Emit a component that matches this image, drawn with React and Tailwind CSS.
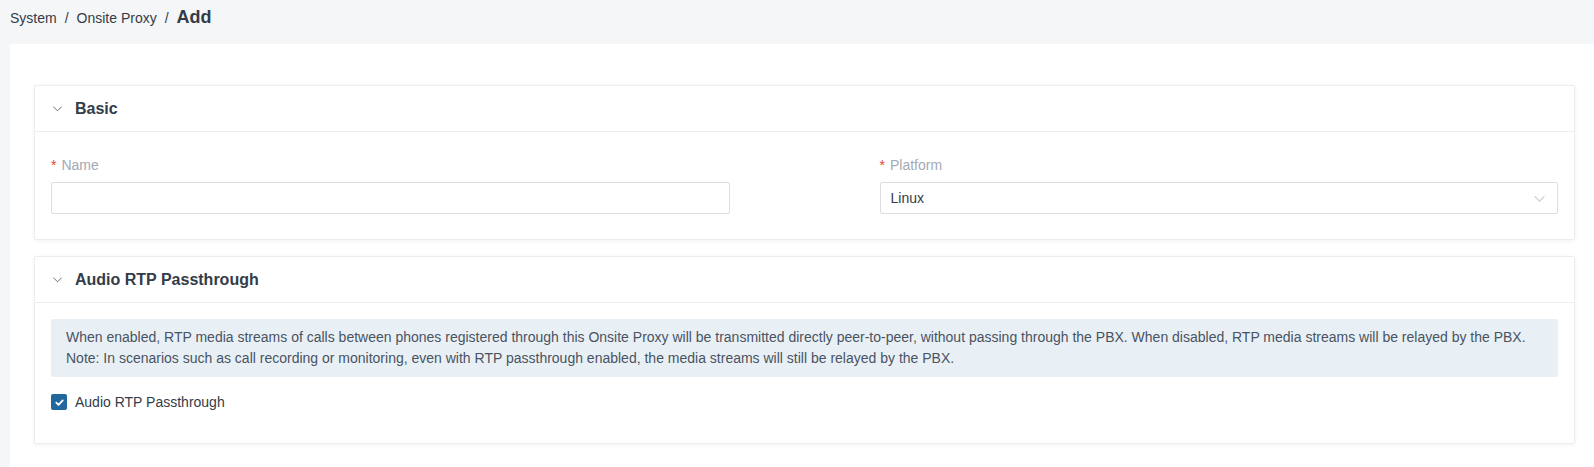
import { useState } from 'react'

function Chevron({ className }) {
  return (
    <svg viewBox="0 0 12 12" className={className} fill="none" stroke="currentColor" strokeWidth="1">
      <path d="M1.5 4l4.5 4.5 4.5-4.5" />
    </svg>
  )
}

function Section({ title, children }) {
  return (
    <div className="bg-white border border-[#ebedf0] rounded-[2px] shadow-[0_1px_4px_rgba(0,0,0,0.06)]">
      <div className="h-[46px] flex items-center px-4 border-b border-[#ebedf0]">
        <Chevron className="w-[11px] h-[11px] text-[#5b6470] ml-[1px]" />
        <span className="ml-[12px] text-[16px] font-bold text-[#333c48]">{title}</span>
      </div>
      {children}
    </div>
  )
}

export default function App() {
  const [name, setName] = useState('')
  const [rtp, setRtp] = useState(true)

  return (
    <div className="min-h-[467px] bg-[#f5f6f8] font-['Liberation_Sans',Arial,sans-serif] text-[14px] text-[#333c48]">
      <div className="h-[44px] flex items-start pt-[7px] pl-[10px]">
        <span className="text-[14px] text-[#333c48] leading-[20px] mt-[1px]">System</span>
        <span className="mx-[8px] text-[14px] text-[#333c48] leading-[20px] mt-[1px]">/</span>
        <span className="text-[14px] text-[#333c48] leading-[20px] mt-[1px]">Onsite Proxy</span>
        <span className="mx-[8px] text-[14px] text-[#333c48] leading-[20px] mt-[1px]">/</span>
        <span className="text-[18px] font-bold text-[#333c48] leading-[20px]">Add</span>
      </div>
      <div className="ml-[10px] bg-white pt-[41px] pl-[24px] pr-[19px] pb-[25px] flex flex-col gap-[16px]">
        <Section title="Basic">
          <div className="grid grid-cols-2 gap-x-[150px] px-4 pt-[23px] pb-[25px]">
            <div>
              <div className="text-[14px] text-[#a3aab5] leading-[20px]"><span className="text-[#e5452f] mr-[5px]">*</span>Name</div>
              <input
                value={name}
                onChange={e => setName(e.target.value)}
                className="mt-[7px] w-full h-[32px] border border-[#dcdee3] rounded-[2px] px-[10px] outline-none"
              />
            </div>
            <div>
              <div className="text-[14px] text-[#a3aab5] leading-[20px]"><span className="text-[#e5452f] mr-[5px]">*</span>Platform</div>
              <div className="mt-[7px] w-full h-[32px] border border-[#dcdee3] rounded-[2px] pl-[10px] pr-[10px] flex items-center justify-between">
                <span className="text-[#333c48]">Linux</span>
                <Chevron className="w-[13px] h-[13px] text-[#c8ccd2] mr-[1px]" />
              </div>
            </div>
          </div>
        </Section>
        <Section title="Audio RTP Passthrough">
          <div className="px-4 pt-[16px] pb-[31px]">
            <div className="bg-[#e8f0f6] rounded-[2px] pl-[15px] pr-4 py-[8px] text-[14px] leading-[21px] text-[#4a5361]">
              <div>When enabled, RTP media streams of calls between phones registered through this Onsite Proxy will be transmitted directly peer-to-peer, without passing through the PBX. When disabled, RTP media streams will be relayed by the PBX.</div>
              <div>Note: In scenarios such as call recording or monitoring, even with RTP passthrough enabled, the media streams will still be relayed by the PBX.</div>
            </div>
            <label className="mt-[15px] flex items-center cursor-pointer" onClick={() => setRtp(v => !v)}>
              <span className={`w-[16px] h-[16px] rounded-[2px] flex items-center justify-center ${rtp ? 'bg-[#21689f]' : 'border border-[#dcdee3] bg-white'}`}>
                {rtp && (
                  <svg viewBox="0 0 12 12" className="w-[11px] h-[11px]" fill="none" stroke="white" strokeWidth="2" strokeLinecap="round" strokeLinejoin="round">
                    <path d="M2.5 6.2l2.4 2.3 4.6-4.8" />
                  </svg>
                )}
              </span>
              <span className="ml-[8px] text-[#333c48] leading-[20px]">Audio RTP Passthrough</span>
            </label>
          </div>
        </Section>
      </div>
    </div>
  )
}
